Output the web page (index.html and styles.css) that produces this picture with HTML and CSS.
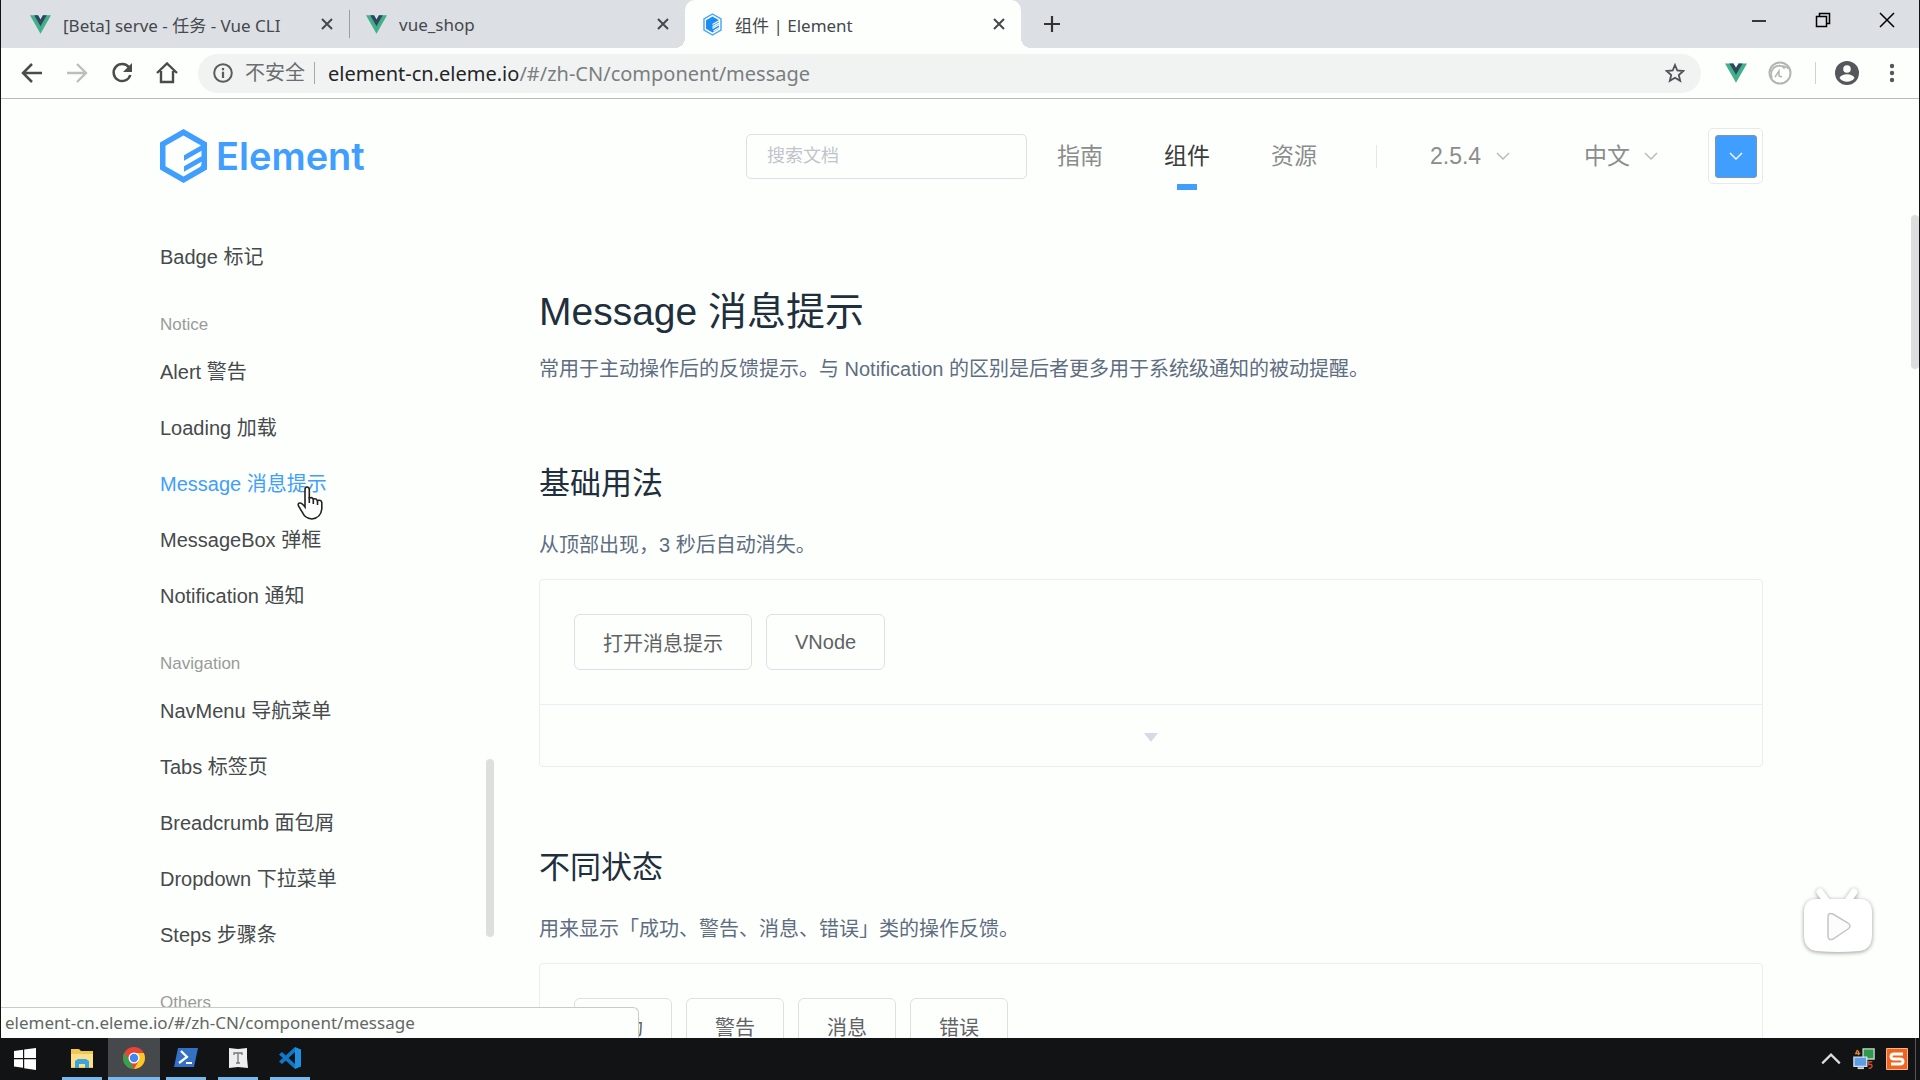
FILE: index.html
```html
<!DOCTYPE html>
<html lang="zh-CN">
<head>
<meta charset="utf-8">
<meta name="viewport" content="width=device-width, initial-scale=1">
<title>组件 | Element</title>
<link rel="stylesheet" href="styles.css">
</head>
<body>
<svg class="defs" aria-hidden="true">
  <symbol id="vue" viewBox="0 0 24 21"><path fill="#42b088" d="M0 0h9.200l2.800 4.800L14.800 0H24L12 21z"/><path fill="#2f4860" d="M4.800 0h4.400l2.800 4.800L14.800 0h4.400L12 12.500z"/></symbol>
  <symbol id="cross" viewBox="0 0 14 14"><path d="M2 2l10 10M12 2L2 12" fill="none" stroke="currentColor" stroke-width="2"/></symbol>
  <symbol id="chevron" viewBox="0 0 14 8"><path d="M1 1l6 6 6-6" fill="none" stroke="currentColor" stroke-width="1.400"/></symbol>
</svg>
<div class="window">
  <div class="tabstrip">
    <div class="tabs" role="tablist">
      <div class="tab" role="tab"><svg class="favicon"><use href="#vue"/></svg><span class="tab-title">[Beta] serve - 任务 - Vue CLI</span><button class="tab-close" aria-label="关闭"><svg><use href="#cross"/></svg></button></div>
      <div class="tab tab-divided" role="tab"><svg class="favicon"><use href="#vue"/></svg><span class="tab-title">vue_shop</span><button class="tab-close" aria-label="关闭"><svg><use href="#cross"/></svg></button></div>
      <div class="tab active" role="tab" aria-selected="true"><svg class="favicon tall" viewBox="0 0 20 23"><path d="M10 1l8.500 5v11L10 22l-8.500-5V6z" fill="#fff" stroke="#46a3f7" stroke-width="1.400"/><path d="M10 3.500l6.500 3.800v2L10 13v1.500l6.500-3.700v5L10 19.500l-6.500-3.800V7.300z" fill="#1c8cf5"/><path d="M10 11.500l7-4M10 15.500l7-4M11 18l6-3.500" stroke="#fff" stroke-width="1.200"/></svg><span class="tab-title">组件 | Element</span><button class="tab-close" aria-label="关闭"><svg><use href="#cross"/></svg></button></div>
    </div>
    <button class="new-tab" aria-label="新标签页"><svg viewBox="0 0 18 18"><path d="M9 1v16M1 9h16" stroke="#333" stroke-width="2.200"/></svg></button>
    <div class="window-controls">
      <button aria-label="最小化"><svg viewBox="0 0 16 16"><path d="M1 9h14" stroke="#000" stroke-width="1.500"/></svg></button>
      <button aria-label="还原"><svg viewBox="0 0 16 16" fill="none" stroke="#000" stroke-width="1.500"><path d="M1.500 4.500h10v10h-10zM4.500 4.500v-3h10v10h-3"/></svg></button>
      <button aria-label="关闭"><svg viewBox="0 0 16 16"><path d="M1 1l14 14M15 1L1 15" stroke="#000" stroke-width="1.500"/></svg></button>
    </div>
  </div>

  <div class="toolbar">
    <div class="nav-buttons">
      <button aria-label="后退"><svg viewBox="0 0 22 22" fill="none" stroke="#4b4b4b" stroke-width="2.500"><path d="M21 11H3M11 2l-9 9 9 9"/></svg></button>
      <button aria-label="前进"><svg viewBox="0 0 22 22" fill="none" stroke="#bcbebd" stroke-width="2.300"><path d="M1 11h18M11 2l9 9-9 9"/></svg></button>
      <button aria-label="重新加载"><svg viewBox="0 0 22 22"><path d="M18 5.500A8.500 8.500 0 1 0 19.300 13" fill="none" stroke="#4b4b4b" stroke-width="2.500"/><path d="M21 1v9h-9z" fill="#4b4b4b"/></svg></button>
      <button aria-label="主页"><svg viewBox="0 0 22 22"><path d="M1 11L11 1.500 21 11M5 9v11h12V9" fill="none" stroke="#4b4b4b" stroke-width="2.400"/></svg></button>
    </div>
    <div class="omnibox">
      <svg class="info" viewBox="0 0 20 20"><circle cx="10" cy="10" r="8.800" fill="none" stroke="#5a5c5e" stroke-width="2"/><path d="M10 8.800V15M10 5v2.200" stroke="#5a5c5e" stroke-width="2.200"/></svg>
      <span class="insecure">不安全</span>
      <span class="url">element-cn.eleme.io<span class="url-path">/#/zh-CN/component/message</span></span>
      <button class="star" aria-label="收藏"><svg viewBox="0 0 20 20"><path d="M10 2l2.300 5.500 6 .5-4.500 4 1.400 5.800L10 14.700l-5.200 3.100L6.200 12 1.700 8l6-.5z" fill="none" stroke="#505255" stroke-width="1.800"/></svg></button>
    </div>
    <div class="extensions">
      <svg class="ext-vue"><use href="#vue"/></svg>
      <svg class="ext-round" viewBox="0 0 24 24" fill="none" stroke="#b4b4b4"><circle cx="12" cy="12" r="10.500" stroke-width="2"/><path d="M4 17C1 8 8 3 17 5.500M5 7c5-3 9-3 11 0 1-2 4-1 4 1M7 16l4-6v5l3 1" stroke-width="1.500"/></svg>
      <span class="ext-divider"></span>
      <button class="profile" aria-label="用户"><svg viewBox="0 0 24 24"><circle cx="12" cy="12" r="12" fill="#55575a"/><circle cx="12" cy="8" r="3.800" fill="#fdfefc"/><path d="M4.500 17c2-5 13-5 15 0-3.500 5-11.500 5-15 0z" fill="#fdfefc"/></svg></button>
      <button class="menu" aria-label="菜单"><svg viewBox="0 0 6 20" fill="#55575a"><circle cx="3" cy="3" r="2.200"/><circle cx="3" cy="10" r="2.200"/><circle cx="3" cy="17" r="2.200"/></svg></button>
    </div>
  </div>

  <div class="page">
    <header class="header">
      <a class="logo" href="#" aria-label="Element">
        <svg viewBox="0 0 47 54"><path d="M23.500 0L47 13.500v27L23.500 54 0 40.500v-27zM23.500 6.500L5.500 16.800v20.400l18 10.300 16-9.200c2-1.300 2-3 2-5.500l-17.500 10v-5.500l17.500-10v-5.500l-17.500 10v-5.500l17-9.700z" fill="#409eff" fill-rule="evenodd"/></svg>
        <span>Element</span>
      </a>
      <input class="search" type="text" placeholder="搜索文档" aria-label="搜索文档">
      <nav class="main-nav"><a href="#">指南</a><a href="#" class="current">组件</a><a href="#">资源</a></nav>
      <span class="header-divider"></span>
      <label class="picker version"><select aria-label="版本"><option>2.5.4</option></select><svg><use href="#chevron"/></svg></label>
      <label class="picker language"><select aria-label="语言"><option>中文</option></select><svg><use href="#chevron"/></svg></label>
      <button class="theme" aria-label="主题颜色"><span><svg><use href="#chevron"/></svg></span></button>
    </header>

    <div class="body">
      <nav class="sidebar">
        <a href="#">Badge 标记</a>
        <h4>Notice</h4>
        <a href="#">Alert 警告</a>
        <a href="#">Loading 加载</a>
        <a href="#" class="current">Message 消息提示</a>
        <a href="#">MessageBox 弹框</a>
        <a href="#">Notification 通知</a>
        <h4>Navigation</h4>
        <a href="#">NavMenu 导航菜单</a>
        <a href="#">Tabs 标签页</a>
        <a href="#">Breadcrumb 面包屑</a>
        <a href="#">Dropdown 下拉菜单</a>
        <a href="#">Steps 步骤条</a>
        <h4>Others</h4>
        <span class="sidebar-thumb"></span>
      </nav>
      <main class="content">
        <h2>Message 消息提示</h2>
        <p class="intro">常用于主动操作后的反馈提示。与 Notification 的区别是后者更多用于系统级通知的被动提醒。</p>
        <h3>基础用法</h3>
        <p>从顶部出现，3 秒后自动消失。</p>
        <section class="demo">
          <div class="demo-source"><button>打开消息提示</button><button>VNode</button></div>
          <button class="demo-toggle" aria-label="显示代码"><svg viewBox="0 0 14 9"><path d="M0 0h14L7 9z" fill="#d3dce6"/></svg></button>
        </section>
        <h3>不同状态</h3>
        <p>用来显示「成功、警告、消息、错误」类的操作反馈。</p>
        <section class="demo">
          <div class="demo-source"><button>成功</button><button>警告</button><button>消息</button><button>错误</button></div>
          <button class="demo-toggle" aria-label="显示代码"><svg viewBox="0 0 14 9"><path d="M0 0h14L7 9z" fill="#d3dce6"/></svg></button>
        </section>
      </main>
    </div>

    <span class="page-thumb"></span>
    <div class="status">element-cn.eleme.io/#/zh-CN/component/message</div>
    <svg class="player" viewBox="0 0 84 84"><path d="M24 13l7 10M58 13l-7 10" stroke="#fff" stroke-width="7" stroke-linecap="round"/><path d="M20 20h44q11 0 12 12v24q0 14-12 16-22 2-44 0Q8 70 8 56V32q1-12 12-12z" fill="#fff"/><path d="M32 38q0-5 5-3l15 9q4 3 0 6l-15 10q-5 2-5-3z" fill="#fbfcfb" stroke="#c4c4c4" stroke-width="1.500"/></svg>
    <svg class="cursor" viewBox="0 0 26 34"><path d="M8 19V3.500Q8 1 10 1t2.300 2.500V12q3-1 4 1 3-1 4 1.500 4-1 4.500 2V23q-1 9-10 10-7-1-9-6L1.500 20q-1-3 1.500-3 2 0 5 4z" fill="#fff" stroke="#222" stroke-width="1.600"/><path d="M12.300 11v6M16.300 13v5M20.500 14.500V19" stroke="#222" stroke-width="1.600"/></svg>
  </div>
</div>

<footer class="taskbar">
  <div class="apps">
    <button class="start" aria-label="开始"><svg viewBox="0 0 24 24" fill="#fff"><path d="M1 4l9-1.300V11H1zM11.200 2.500L23 1v10H11.200zM1 12.200h9v8.600L1 19.500zM11.200 12.200H23V23l-11.800-1.700z"/></svg></button>
    <button class="app" aria-label="文件资源管理器"><svg viewBox="0 0 24 24"><path d="M1 3h8l2 2h12v17H1z" fill="#f0c756"/><path d="M1 8h22v13H1z" fill="#fbe089"/><path d="M5 22v-7l3-2h8l3 2v7h-4v-4H9v4z" fill="#39a5dc"/></svg></button>
    <button class="app focused" aria-label="Chrome"><svg viewBox="0 0 24 24"><circle cx="12" cy="12" r="11" fill="#e94435"/><path d="M2.500 6.500L8 16l4 7A11 11 0 0 1 2.500 6.500z" fill="#31a350"/><path d="M12 7h9.800A11 11 0 0 1 12 23l5-8.500z" fill="#fbc924"/><circle cx="12" cy="12" r="5.500" fill="#fff"/><circle cx="12" cy="12" r="4.200" fill="#4286f4"/></svg></button>
    <button class="app" aria-label="PowerShell"><svg viewBox="0 0 24 24"><path d="M4 2h20l-4 19H0z" fill="#3470c4"/><path d="M7 5l6 6-8 6M12 17h6" fill="none" stroke="#fff" stroke-width="2.200"/></svg></button>
    <button class="app" aria-label="Typora"><svg viewBox="0 0 24 24"><path d="M3 2l9 1 9-1v10l1 10-10-1-9 1z" fill="#eee"/><path d="M8 9V7h8v2M12 7v10M10 17h4" fill="none" stroke="#777" stroke-width="1.300"/></svg></button>
    <button class="app" aria-label="VS Code"><svg viewBox="0 0 24 24"><path d="M17 1l6 2.500v17L17 23z" fill="#1f8fe0"/><path d="M17 1v5L4 18l-3-2.500zM1 8.500L4 6l13 12v5z" fill="#0f78c8"/></svg></button>
  </div>
  <div class="tray">
    <svg viewBox="0 0 20 20" fill="none" stroke="#ddd" stroke-width="2"><path d="M2 14l8-8 8 8"/></svg>
    <svg viewBox="0 0 24 24"><path d="M11 1h12v11H11z" fill="#2f9a4c" stroke="#c5d6ca" stroke-width="1.500"/><path d="M1 10h14v10H1z" fill="#5c9de4" stroke="#cfe0f2" stroke-width="1.500"/><path d="M5 22h7" stroke="#ddd" stroke-width="2"/><path d="M5 2L3 6h5M6 3v5" fill="none" stroke="#d8802c" stroke-width="1.500"/><path d="M21 15h-4v3h3q2 2-1 4h-2" fill="none" stroke="#d5482c" stroke-width="1.600"/></svg>
    <svg viewBox="0 0 22 22"><path d="M.5.500h21v21H.500z" fill="#f0641e" stroke="#f7b38c"/><path d="M17 6H8Q5 6 5 8.500T8 11h6q3 0 3 2.500T14 16H5" fill="none" stroke="#fff" stroke-width="3"/></svg>
    <span class="peek"></span>
  </div>
</footer>
</body>
</html>
```

FILE: styles.css
```css
* {
  box-sizing: border-box;
}

body {
  margin: 0;
  height: 100vh;
  display: flex;
  flex-direction: column;
  overflow: hidden;
  background: #111315;
  font-family: "Liberation Sans", "Noto Sans CJK SC", sans-serif;
  font-size: 20px;
}

button {
  display: flex;
  align-items: center;
  justify-content: center;
  padding: 0;
  border: 0;
  background: none;
  color: inherit;
  font: inherit;
}

a {
  color: inherit;
  text-decoration: none;
}

svg {
  display: block;
  flex: none;
}

.defs {
  position: absolute;
  width: 0;
  height: 0;
}

.window {
  flex: 1;
  min-height: 0;
  display: flex;
  flex-direction: column;
  margin: 0 1px;
  background: #fdfffc;
}

/* Tab strip */
.tabstrip {
  display: flex;
  height: 48px;
  padding-left: 12px;
  background: #dcdfe4;
  font-family: "Noto Sans", "Noto Sans CJK SC", sans-serif;
  font-size: 17px;
  color: #45484c;
}

.tabs {
  display: flex;
}

.tab {
  position: relative;
  display: flex;
  align-items: center;
  width: 336px;
  padding: 0 15px 0 17px;
}

.tab-divided::before {
  content: "";
  position: absolute;
  left: 0;
  top: 10px;
  width: 1px;
  height: 28px;
  background: #9a9da3;
}

.tab.active {
  background: #fdfffc;
  border-radius: 10px 10px 0 0;
}

.tab.active::before,
.tab.active::after {
  content: "";
  position: absolute;
  bottom: 0;
  width: 10px;
  height: 10px;
}

.tab.active::before {
  right: 100%;
  background: radial-gradient(circle at 0 0, transparent 10px, #fdfffc 10px);
}

.tab.active::after {
  left: 100%;
  background: radial-gradient(circle at 100% 0, transparent 10px, #fdfffc 10px);
}

.favicon {
  width: 21px;
  height: 19px;
  margin-right: 12px;
}

.favicon.tall {
  height: 23px;
}

.tab-title {
  flex: 1;
  white-space: nowrap;
}

.tab-close svg {
  width: 14px;
  height: 14px;
}

.new-tab {
  margin-left: 22px;
}

.new-tab svg {
  width: 18px;
  height: 18px;
}

.window-controls {
  display: flex;
  margin-left: auto;
}

.window-controls button {
  width: 64px;
  height: 40px;
}

.window-controls svg {
  width: 16px;
  height: 16px;
}

/* Address bar */
.toolbar {
  display: flex;
  align-items: center;
  height: 51px;
  padding: 0 24px 0 20px;
  border-bottom: 1px solid #b9bbb9;
  font-family: "Noto Sans", "Noto Sans CJK SC", sans-serif;
}

.nav-buttons {
  display: flex;
  gap: 23px;
}

.nav-buttons svg {
  width: 22px;
  height: 22px;
}

.omnibox {
  flex: 1;
  display: flex;
  align-items: center;
  height: 39px;
  margin-left: 20px;
  padding: 0 16px 0 15px;
  border-radius: 20px;
  background: #f1f3f2;
}

.info {
  width: 20px;
  height: 20px;
}

.insecure {
  margin-left: 12px;
  padding-right: 9px;
  border-right: 1px solid #a5a8aa;
  line-height: 22px;
  color: #6b6e70;
}

.url {
  flex: 1;
  margin-left: 13px;
  color: #222527;
}

.url-path {
  color: #7a7e80;
}

.star svg {
  width: 20px;
  height: 20px;
}

.extensions {
  display: flex;
  align-items: center;
}

.ext-vue {
  width: 22px;
  height: 20px;
  margin-left: 24px;
}

.ext-round {
  width: 24px;
  height: 24px;
  margin-left: 21px;
}

.ext-divider {
  width: 1px;
  height: 22px;
  margin: 0 19px 0 23px;
  background: #cfd1d1;
}

.profile svg {
  width: 24px;
  height: 24px;
}

.menu {
  margin-left: 30px;
}

.menu svg {
  width: 6px;
  height: 20px;
}

/* Page */
.page {
  position: relative;
  flex: 1;
  min-height: 0;
  overflow: hidden;
  padding: 0 156px 0 159px;
}

.header {
  display: flex;
  align-items: center;
  height: 114px;
  color: #8b8d8c;
  font-size: 23px;
}

.logo {
  display: flex;
  align-items: center;
  gap: 9px;
  color: #409eff;
  font-family: Inter, sans-serif;
  font-size: 38px;
  font-weight: 600;
}

.logo svg {
  width: 47px;
  height: 54px;
}

.search {
  width: 281px;
  height: 45px;
  margin-left: auto;
  padding: 0 20px;
  border: 1px solid #dcdfe6;
  border-radius: 5px;
  background: none;
  font: inherit;
  font-size: 18px;
}

.search::placeholder {
  color: #c0c4cc;
}

.main-nav {
  display: flex;
  gap: 61px;
  margin-left: 30px;
}

.main-nav a {
  position: relative;
  line-height: 68px;
}

.main-nav .current {
  color: #3a3c3d;
}

.main-nav .current::after {
  content: "";
  position: absolute;
  left: 50%;
  bottom: 0;
  width: 20px;
  height: 6px;
  margin-left: -10px;
  background: #409eff;
}

.header-divider {
  width: 1px;
  height: 23px;
  margin-left: 59px;
  background: #e6e8e8;
}

.picker {
  display: flex;
  align-items: center;
  gap: 14px;
}

.picker select {
  appearance: none;
  padding: 0;
  border: 0;
  background: none;
  color: #8b8d8c;
  font: inherit;
}

.picker svg {
  width: 14px;
  height: 8px;
  color: #b5b8b8;
}

.version {
  margin-left: 53px;
}

.language {
  margin-left: 74px;
}

.theme {
  width: 55px;
  height: 56px;
  margin-left: 50px;
  border: 1px solid #e8eaea;
  border-radius: 5px;
}

.theme span {
  display: flex;
  align-items: center;
  justify-content: center;
  width: 42px;
  height: 43px;
  border: 1px solid #7d95ad;
  border-radius: 3px;
  background: #409eff;
  color: #fff;
}

.theme svg {
  width: 14px;
  height: 8px;
}

.body {
  display: flex;
  gap: 45px;
}

/* Side menu */
.sidebar {
  position: relative;
  flex: none;
  width: 334px;
  padding-top: 16px;
  color: #464a4c;
}

.sidebar a {
  display: block;
  line-height: 56px;
}

.sidebar .current {
  color: #409eff;
}

.sidebar h4 {
  margin: 20px 0 0;
  font-size: 17px;
  font-weight: 400;
  line-height: 39px;
  color: #999b9a;
}

.sidebar-thumb {
  position: absolute;
  right: 0;
  top: 546px;
  width: 8px;
  height: 178px;
  border-radius: 4px;
  background: #dddfdf;
}

/* Article */
.content {
  flex: 1;
  min-width: 0;
  padding-top: 73px;
  color: #5e6d82;
}

.content h2 {
  margin: 0;
  font-size: 39px;
  font-weight: 400;
  line-height: 52px;
  color: #1f2f3d;
}

.content h3 {
  margin: 81px 0 27px;
  font-size: 31px;
  font-weight: 400;
  line-height: 40px;
  color: #1f2f3d;
}

.content p {
  margin: 0 0 20px;
  line-height: 28px;
}

.content .intro {
  margin-top: 17px;
}

.demo {
  border: 1px solid #ebeeef;
  border-radius: 4px;
}

.demo-source {
  display: flex;
  gap: 14px;
  padding: 34px;
}

.demo-source button {
  height: 56px;
  padding: 0 28px;
  border: 1px solid #dcdfe6;
  border-radius: 6px;
  color: #606266;
}

.demo-toggle {
  width: 100%;
  height: 62px;
  padding-top: 3px;
  border-top: 1px solid #eaeefb;
}

.demo-toggle svg {
  width: 14px;
  height: 9px;
}

/* Overlays */
.page-thumb {
  position: absolute;
  right: 0;
  top: 116px;
  width: 8px;
  height: 154px;
  border-radius: 4px;
  background: #dcdddd;
}

.status {
  position: absolute;
  left: 0;
  bottom: 0;
  width: 638px;
  height: 31px;
  padding-left: 4px;
  border: 1px solid #c9cbcb;
  border-width: 1px 1px 0 0;
  border-radius: 0 6px 0 0;
  background: #fdfffc;
  color: #636766;
  font-family: "Noto Sans", sans-serif;
  font-size: 17px;
  line-height: 30px;
}

.player {
  position: absolute;
  right: 39px;
  bottom: 75px;
  width: 84px;
  height: 84px;
  filter: drop-shadow(0 1px 2px #999);
}

.cursor {
  position: absolute;
  left: 296px;
  top: 387px;
  width: 26px;
  height: 34px;
}

/* Taskbar */
.taskbar {
  display: flex;
  justify-content: space-between;
  height: 42px;
  padding-right: 4px;
}

.apps {
  display: flex;
  gap: 12px;
}

.apps svg {
  width: 24px;
  height: 24px;
}

.start {
  width: 50px;
}

.app {
  width: 40px;
  border-bottom: 3px solid #76b9ed;
}

.app.focused {
  width: 52px;
  margin: 0 -6px;
  background: #46494b;
}

.tray {
  display: flex;
  align-items: center;
  gap: 11px;
}

.tray svg {
  width: 22px;
  height: 22px;
}

.peek {
  width: 1px;
  height: 42px;
  margin-left: -4px;
  background: #555;
}
```
